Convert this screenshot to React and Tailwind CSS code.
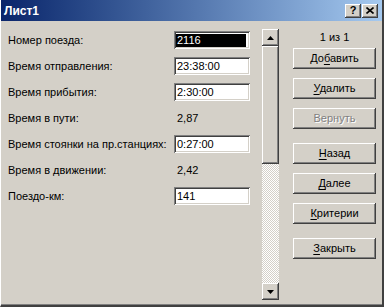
import React from 'react';

const raised =
  'bg-[#d4d0c8] shadow-[inset_-1px_-1px_0_#404040,inset_1px_1px_0_#ffffff,inset_-2px_-2px_0_#808080,inset_2px_2px_0_#d4d0c8]';
const sunken =
  'bg-white shadow-[inset_1px_1px_0_#808080,inset_-1px_-1px_0_#ffffff,inset_2px_2px_0_#404040,inset_-2px_-2px_0_#d4d0c8]';

const rows = [
  { label: 'Номер поезда:', value: '2116', input: true, selected: true },
  { label: 'Время отправления:', value: '23:38:00', input: true },
  { label: 'Время прибытия:', value: '2:30:00', input: true },
  { label: 'Время в пути:', value: '2,87' },
  { label: 'Время стоянки на пр.станциях:', value: '0:27:00', input: true },
  { label: 'Время в движении:', value: '2,42' },
  { label: 'Поездо-км:', value: '141', input: true },
];

function Btn({ pre = '', u, post, disabled, className = '' }) {
  return (
    <div className={`${raised} h-[21px] w-[83px] flex items-center justify-center ${className}`}>
      {disabled ? (
        <span className="text-[#808080] [text-shadow:1px_1px_0_#ffffff]">{pre + (u || '') + post}</span>
      ) : (
        <span>
          {pre}
          <span className="underline underline-offset-2">{u}</span>
          {post}
        </span>
      )}
    </div>
  );
}

function Arrow({ up }) {
  return (
    <div className={`${raised} h-[17px] w-[17px] flex items-center justify-center`}>
      <svg width="7" height="4" viewBox="0 0 7 4">
        {up ? <path d="M3.5 0 L7 4 L0 4 Z" fill="#000" /> : <path d="M0 0 L7 0 L3.5 4 Z" fill="#000" />}
      </svg>
    </div>
  );
}

export default function App() {
  return (
    <div
      className="w-[384px] h-[307px] bg-[#d4d0c8] overflow-hidden flex flex-col text-[11px] text-black border-l border-l-[#ffffff] border-r-2 border-r-[#404040] border-b-2 border-b-[#404040]"
      style={{ fontFamily: '"Liberation Sans", Arial, sans-serif' }}
    >
      <div className="h-[21px] shrink-0 bg-linear-to-r from-[#0a246a] to-[#a6caf0] flex items-center pl-[3px] pr-[4px] -ml-px">
        <span className="text-white font-bold text-[12px] flex-1 pl-[1px]">Лист1</span>
        <div className={`${raised} w-[16px] h-[14px] flex items-center justify-center font-bold text-[11px] leading-none`}>?</div>
        <div className={`${raised} w-[16px] h-[14px] ml-[1px] flex items-center justify-center`}>
          <svg width="8" height="7" viewBox="0 0 8 7">
            <path d="M0.5 0.5 L7.5 6.5 M7.5 0.5 L0.5 6.5" stroke="#000" strokeWidth="1.6" />
          </svg>
        </div>
      </div>
      <div className="flex flex-1 border-b border-b-[#808080]">
        <div className="w-[252px] pl-[7px] pt-[10px] flex flex-col">
          {rows.map((r) => (
            <div key={r.label} className="h-[26px] flex">
              <div className="w-[166px] h-[18px] flex items-center">{r.label}</div>
              {r.input ? (
                <div className={`${sunken} w-[76px] h-[18px] flex items-center pl-[3px]`}>
                  {r.selected ? (
                    <div className="bg-black text-white w-[70px] h-[13px] flex items-center -ml-px pl-px">{r.value}</div>
                  ) : (
                    r.value
                  )}
                </div>
              ) : (
                <div className="h-[18px] flex items-center pl-[3px]">{r.value}</div>
              )}
            </div>
          ))}
        </div>
        <div className="w-[17px] ml-[9px] mt-[8px] h-[271px] flex flex-col">
          <Arrow up />
          <div className={`${raised} h-[118px]`} />
          <div className="flex-1 bg-[image:repeating-conic-gradient(#ffffff_0_25%,#d4d0c8_0_50%)] bg-[length:2px_2px]" />
          <Arrow />
        </div>
        <div className="ml-[14px] flex flex-col">
          <div className="h-[27px] flex items-center justify-center pt-[5px] w-[83px]">1 из 1</div>
          <Btn pre="До" u="б" post="авить" />
          <Btn u="У" post="далить" className="mt-[9px]" />
          <Btn pre="Вернуть" post="" disabled className="mt-[9px]" />
          <Btn u="Н" post="азад" className="mt-[14px]" />
          <Btn u="Д" post="алее" className="mt-[9px]" />
          <Btn u="К" post="ритерии" className="mt-[9px]" />
          <Btn u="З" post="акрыть" className="mt-[14px]" />
        </div>
      </div>
    </div>
  );
}
